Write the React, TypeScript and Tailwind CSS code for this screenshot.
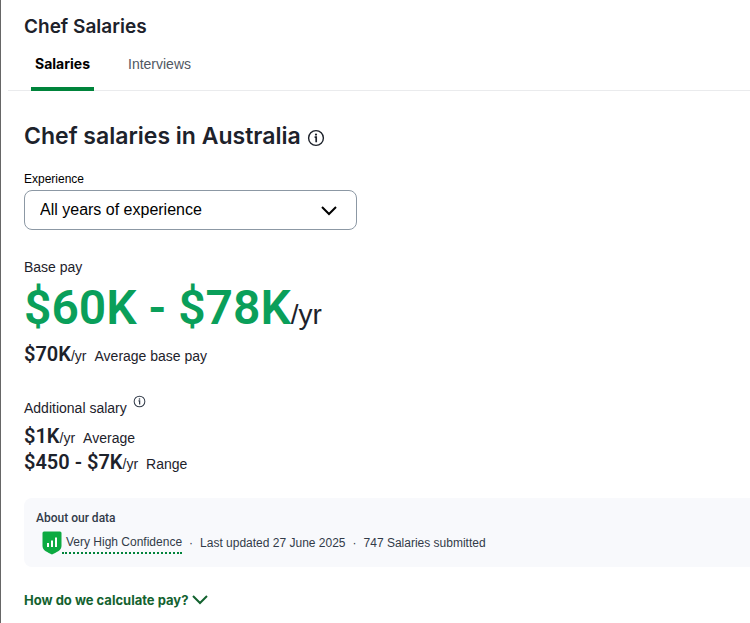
import React, { useState } from 'react'

const TABS = ['Salaries', 'Interviews']

const EXPERIENCE = [
  'All years of experience',
  '0-1 Years',
  '1-3 Years',
  '4-6 Years',
  '7-9 Years',
  '10-14 Years',
  '15+ Years',
]

function InfoIcon({ className }: { className: string }) {
  return (
    <svg viewBox="0 0 18 18" fill="none" className={className} aria-hidden="true">
      <circle cx="9" cy="9" r="7.4" stroke="currentColor" strokeWidth="1.4" />
      <circle cx="9" cy="5.6" r="1.1" fill="currentColor" />
      <path d="M7.6 8.2H9.2V13.2" stroke="currentColor" strokeWidth="1.7" />
    </svg>
  )
}

function Chevron({ className }: { className: string }) {
  return (
    <svg viewBox="0 0 16 10" fill="none" className={className} aria-hidden="true">
      <path d="M1 1L8 8L15 1" stroke="currentColor" strokeWidth="2" />
    </svg>
  )
}

function ShieldIcon() {
  return (
    <svg viewBox="0 0 20 24" className="h-6 w-5 shrink-0" aria-hidden="true">
      <path
        d="M2 .5H18Q19.5 .5 19.5 2V15C19.5 19.5 14 21.5 10 23.5C6 21.5 .5 19.5 .5 15V2Q.5 .5 2 .5Z"
        fill="#0caa41"
      />
      <path d="M6 16V12M10 16V9.5M14 16V6.5" stroke="#fff" strokeWidth="2" />
    </svg>
  )
}

interface PayRowProps {
  amount: string
  label: string
}

function PayRow({ amount, label }: PayRowProps) {
  return (
    <p className="flex items-baseline text-sm leading-6">
      <span className="font-['Roboto'] text-xl leading-6 font-semibold">{amount}</span>
      <span className="mr-2">/yr</span>
      <span>{label}</span>
    </p>
  )
}

export default function App() {
  const [activeTab, setActiveTab] = useState('Salaries')
  const [experience, setExperience] = useState(EXPERIENCE[0])

  return (
    <div className="min-h-screen border-l border-[#666] bg-white font-['Liberation_Sans',sans-serif] text-[#1d222b]">
      <header>
        <h1 className="px-[23px] pt-[13px] font-['Inter'] text-[19px] leading-7 font-semibold">Chef Salaries</h1>
        <nav className="ml-[7px] flex gap-[30px] border-b border-[#eaebed] pl-[23px]">
          {TABS.map((tab) => (
            <button
              key={tab}
              onClick={() => setActiveTab(tab)}
              className={
                tab === activeTab
                  ? "-mb-px h-[50px] border-b-4 border-[#00843b] px-1 font-['Inter'] text-sm font-bold text-black"
                  : '-mb-px h-[50px] border-b-4 border-transparent px-1 text-sm text-[#505863]'
              }
            >
              {tab}
            </button>
          ))}
        </nav>
      </header>

      <main className="pt-7 pl-[23px]">
        <h2 className="flex items-center gap-[6px] font-['Inter'] text-[23px] leading-[34px] font-semibold">
          Chef salaries in Australia
          <button aria-label="About these salaries" className="pt-1">
            <InfoIcon className="size-[18px]" />
          </button>
        </h2>

        <label htmlFor="experience" className="mt-[18px] block text-xs leading-4 text-black">
          Experience
        </label>
        <div className="relative mt-[3px] w-[333px] max-w-full">
          <select
            id="experience"
            value={experience}
            onChange={(e) => setExperience(e.target.value)}
            className="h-10 w-full appearance-none rounded-lg border border-[#8c98a4] bg-white px-[15px] text-base text-black"
          >
            {EXPERIENCE.map((item) => (
              <option key={item}>{item}</option>
            ))}
          </select>
          <Chevron className="pointer-events-none absolute top-4 right-5 h-[10px] w-4 text-black" />
        </div>

        <section className="mt-7">
          <h3 className="text-sm leading-[18px]">Base pay</h3>
          <p className="mt-[5px] flex items-baseline text-[28px] leading-[54px]">
            <span className="font-['Roboto'] text-5xl leading-[54px] font-semibold text-[#0a9f5a]">$60K - $78K</span>
            /yr
          </p>
          <PayRow amount="$70K" label="Average base pay" />
        </section>

        <section className="mt-[27px]">
          <h3 className="mb-1 flex items-center gap-[6px] text-sm leading-6">
            Additional salary
            <button aria-label="About additional salary" className="pb-3 text-[#323b49]">
              <InfoIcon className="size-[13px]" />
            </button>
          </h3>
          <PayRow amount="$1K" label="Average" />
          <PayRow amount="$450 - $7K" label="Range" />
        </section>

        <section className="mt-[22px] rounded-l-lg bg-[#f8f9fc] px-3 py-3 text-xs text-[#323b49]">
          <h3 className="font-['Roboto'] leading-4 font-medium">About our data</h3>
          <div className="mt-[5px] flex items-center pl-[6px]">
            <ShieldIcon />
            <button className="border-b-2 border-dotted border-[#00843b] pl-1 leading-5">Very High Confidence</button>
            <span className="px-[7px]">·</span>
            <span>Last updated 27 June 2025</span>
            <span className="px-[7px]">·</span>
            <span>747 Salaries submitted</span>
          </div>
        </section>

        <button className="mt-[21px] flex items-center gap-1 font-['Inter'] text-[13px] leading-6 font-bold text-[#13622f]">
          How do we calculate pay?
          <Chevron className="h-[10px] w-4" />
        </button>
      </main>
    </div>
  )
}
